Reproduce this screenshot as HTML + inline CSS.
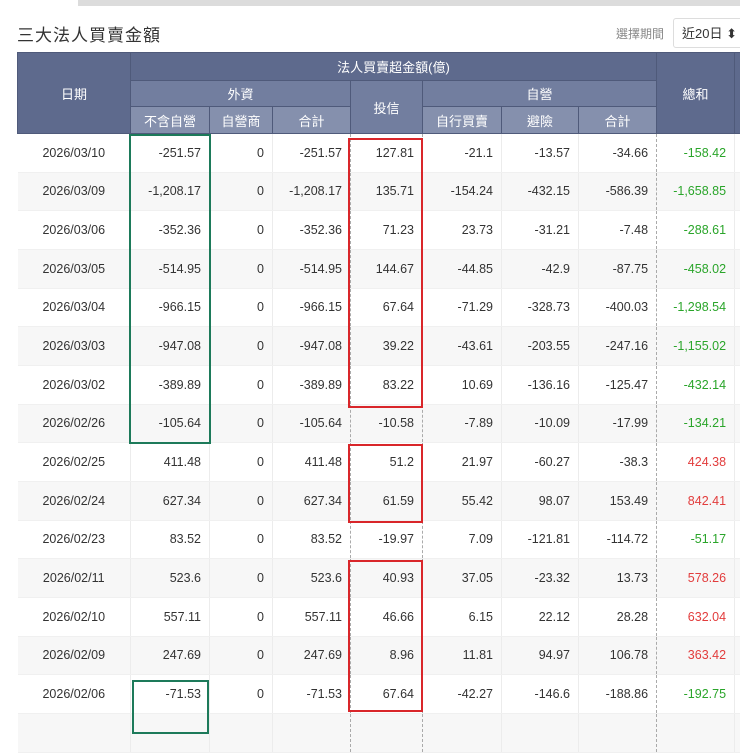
<!DOCTYPE html>
<html><head><meta charset="utf-8"><style>
body{margin:0;width:740px;height:720px;overflow:hidden;background:#fff;font-family:"Liberation Sans","Noto Sans CJK TC",sans-serif;position:relative}
.bar{position:absolute;left:78px;top:0;width:662px;height:6px;background:#dcdcdc}
.title{position:absolute;left:17px;top:21px;font-size:17px;color:#333;letter-spacing:1px}
.sel{position:absolute;left:616px;top:25px;font-size:12px;color:#888}
.box{position:absolute;left:673px;top:18px;width:80px;height:30px;border:1px solid #ddd;border-radius:3px;font-size:13px;color:#333;line-height:30px;padding-left:8px;box-sizing:border-box}
table{position:absolute;left:17px;top:52px;border-collapse:collapse;table-layout:fixed;width:740px}
th{color:#fff;font-weight:normal;font-size:13px;text-align:center;border:1px solid #4f5a7a;padding:0}
.h1{background:#5e6a8d}.h2{background:#727e9f}.h3{background:#8590ad}
td{font-size:12.5px;color:#333;text-align:right;padding:0 8px 0 0;height:37.67px;border-left:1px solid #ececec;border-bottom:1px solid #f0f0f0;white-space:nowrap}
td.d{text-align:center;padding:0;border-left:none}
tbody tr:nth-child(even) td{background:#f7f7f7}
td.ds{border-left:1px dashed #aaa}
.g{color:#2aa52a}.r{color:#e23c3c}
.gb{position:absolute;border:2px solid #1d7a5a}
.rb{position:absolute;border:2px solid #d9262a}
</style></head><body>
<div class="bar"></div>
<div class="title">三大法人買賣金額</div>
<div class="sel">選擇期間</div>
<div class="box">近20日 ⬍</div>
<table>
<colgroup><col style="width:113px"><col style="width:79px"><col style="width:63px"><col style="width:78px"><col style="width:72px"><col style="width:79px"><col style="width:77px"><col style="width:78px"><col style="width:78px"><col style="width:23px"></colgroup>
<thead>
<tr style="height:28px"><th class="h1" rowspan="3">日期</th><th class="h1" colspan="7">法人買賣超金額(億)</th><th class="h1" rowspan="3">總和</th><th class="h1" rowspan="3"></th></tr>
<tr style="height:26px"><th class="h2" colspan="3">外資</th><th class="h2" rowspan="2">投信</th><th class="h2" colspan="3">自營</th></tr>
<tr style="height:27px"><th class="h3">不含自營</th><th class="h3">自營商</th><th class="h3">合計</th><th class="h3">自行買賣</th><th class="h3">避險</th><th class="h3">合計</th></tr>
</thead>
<tbody>
<tr><td class="d">2026/03/10</td><td>-251.57</td><td>0</td><td>-251.57</td><td class="ds">127.81</td><td class="ds">-21.1</td><td>-13.57</td><td>-34.66</td><td class="ds g">-158.42</td><td></td></tr>
<tr><td class="d">2026/03/09</td><td>-1,208.17</td><td>0</td><td>-1,208.17</td><td class="ds">135.71</td><td class="ds">-154.24</td><td>-432.15</td><td>-586.39</td><td class="ds g">-1,658.85</td><td></td></tr>
<tr><td class="d">2026/03/06</td><td>-352.36</td><td>0</td><td>-352.36</td><td class="ds">71.23</td><td class="ds">23.73</td><td>-31.21</td><td>-7.48</td><td class="ds g">-288.61</td><td></td></tr>
<tr><td class="d">2026/03/05</td><td>-514.95</td><td>0</td><td>-514.95</td><td class="ds">144.67</td><td class="ds">-44.85</td><td>-42.9</td><td>-87.75</td><td class="ds g">-458.02</td><td></td></tr>
<tr><td class="d">2026/03/04</td><td>-966.15</td><td>0</td><td>-966.15</td><td class="ds">67.64</td><td class="ds">-71.29</td><td>-328.73</td><td>-400.03</td><td class="ds g">-1,298.54</td><td></td></tr>
<tr><td class="d">2026/03/03</td><td>-947.08</td><td>0</td><td>-947.08</td><td class="ds">39.22</td><td class="ds">-43.61</td><td>-203.55</td><td>-247.16</td><td class="ds g">-1,155.02</td><td></td></tr>
<tr><td class="d">2026/03/02</td><td>-389.89</td><td>0</td><td>-389.89</td><td class="ds">83.22</td><td class="ds">10.69</td><td>-136.16</td><td>-125.47</td><td class="ds g">-432.14</td><td></td></tr>
<tr><td class="d">2026/02/26</td><td>-105.64</td><td>0</td><td>-105.64</td><td class="ds">-10.58</td><td class="ds">-7.89</td><td>-10.09</td><td>-17.99</td><td class="ds g">-134.21</td><td></td></tr>
<tr><td class="d">2026/02/25</td><td>411.48</td><td>0</td><td>411.48</td><td class="ds">51.2</td><td class="ds">21.97</td><td>-60.27</td><td>-38.3</td><td class="ds r">424.38</td><td></td></tr>
<tr><td class="d">2026/02/24</td><td>627.34</td><td>0</td><td>627.34</td><td class="ds">61.59</td><td class="ds">55.42</td><td>98.07</td><td>153.49</td><td class="ds r">842.41</td><td></td></tr>
<tr><td class="d">2026/02/23</td><td>83.52</td><td>0</td><td>83.52</td><td class="ds">-19.97</td><td class="ds">7.09</td><td>-121.81</td><td>-114.72</td><td class="ds g">-51.17</td><td></td></tr>
<tr><td class="d">2026/02/11</td><td>523.6</td><td>0</td><td>523.6</td><td class="ds">40.93</td><td class="ds">37.05</td><td>-23.32</td><td>13.73</td><td class="ds r">578.26</td><td></td></tr>
<tr><td class="d">2026/02/10</td><td>557.11</td><td>0</td><td>557.11</td><td class="ds">46.66</td><td class="ds">6.15</td><td>22.12</td><td>28.28</td><td class="ds r">632.04</td><td></td></tr>
<tr><td class="d">2026/02/09</td><td>247.69</td><td>0</td><td>247.69</td><td class="ds">8.96</td><td class="ds">11.81</td><td>94.97</td><td>106.78</td><td class="ds r">363.42</td><td></td></tr>
<tr><td class="d">2026/02/06</td><td>-71.53</td><td>0</td><td>-71.53</td><td class="ds">67.64</td><td class="ds">-42.27</td><td>-146.6</td><td>-188.86</td><td class="ds g">-192.75</td><td></td></tr>
<tr><td class="d"></td><td></td><td></td><td></td><td class="ds"></td><td class="ds"></td><td></td><td></td><td class="ds"></td><td></td></tr>
</tbody></table>
<div class="gb" style="left:129px;top:134px;width:78px;height:306px"></div>
<div class="gb" style="left:132px;top:680px;width:73px;height:50px"></div>
<div class="rb" style="left:348px;top:138px;width:71px;height:266px"></div>
<div class="rb" style="left:348px;top:444px;width:71px;height:75px"></div>
<div class="rb" style="left:348px;top:560px;width:71px;height:148px"></div>
</body></html>
